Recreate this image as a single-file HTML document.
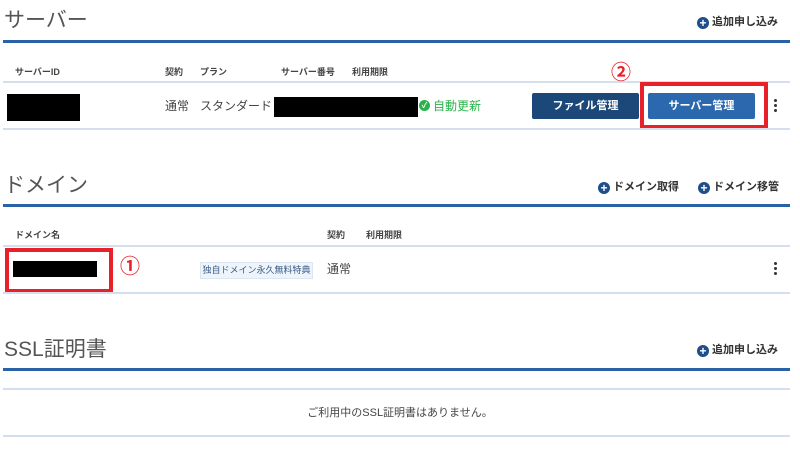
<!DOCTYPE html>
<html><head><meta charset="utf-8"><style>
*{margin:0;padding:0;box-sizing:border-box}
body{width:800px;height:457px;background:#fff;position:relative;overflow:hidden;font-family:"Liberation Sans","Noto Sans CJK JP",sans-serif;color:#333}
.a{position:absolute;white-space:nowrap}
.t{font-size:21px;color:#555;line-height:24px}
.bl{position:absolute;left:3px;width:787px;height:3px;background:#2a62a6}
.ll{position:absolute;left:3px;width:787px;height:2px;background:#d3dfec}
.h{font-size:9px;font-weight:bold;color:#444;line-height:12px}
.c{font-size:12px;color:#444;line-height:14px}
.blk{position:absolute;background:#000}
.add{font-size:11px;font-weight:bold;color:#333;line-height:14px}
.add i{display:inline-block;width:12px;height:12px;border-radius:50%;background:#1e4f8a;color:#fff;font-style:normal;font-size:12px;line-height:12px;text-align:center;vertical-align:-2px;margin-right:3px}
.btn{position:absolute;height:26px;border-radius:2px;color:#fff;font-size:11px;font-weight:bold;text-align:center;line-height:26px}
.red{position:absolute;border:4px solid #e8202a}
.dots{position:absolute;width:3px}
.dots b{display:block;width:3px;height:3px;border-radius:50%;background:#333;margin-bottom:2px}
.n{font-size:20px;color:#e8202a;font-weight:bold;line-height:20px}
</style></head><body>
<div class="a t" style="left:4px;top:9px">サーバー</div>
<div class="a add" style="left:697px;top:15px"><i>+</i>追加申し込み</div>
<div class="bl" style="top:40px"></div>
<div class="a h" style="left:15px;top:66px">サーバーID</div>
<div class="a h" style="left:165px;top:66px">契約</div>
<div class="a h" style="left:200px;top:66px">プラン</div>
<div class="a h" style="left:281px;top:66px">サーバー番号</div>
<div class="a h" style="left:352px;top:66px">利用期限</div>
<div class="ll" style="top:81px"></div>
<div class="blk" style="left:7px;top:94px;width:73px;height:27px"></div>
<div class="a c" style="left:165px;top:99px">通常</div>
<div class="a c" style="left:200px;top:99px">スタンダード</div>
<div class="blk" style="left:274px;top:97px;width:144px;height:20px"></div>
<div class="a" style="left:419px;top:100px;width:11px;height:11px;border-radius:50%;background:#2bb24c;color:#fff;font-size:8px;line-height:11px;text-align:center;font-weight:bold">✓</div>
<div class="a c" style="left:433px;top:99px;color:#2bb24c">自動更新</div>
<div class="a n" style="left:611px;top:63px">②</div>
<div class="btn" style="left:532px;top:93px;width:107px;background:#1b4879">ファイル管理</div>
<div class="red" style="left:640px;top:82px;width:128px;height:47px"></div>
<div class="btn" style="left:648px;top:93px;width:107px;background:#2c68ae">サーバー管理</div>
<div class="dots" style="left:774px;top:99px"><b></b><b></b><b></b></div>
<div class="ll" style="top:128px"></div>

<div class="a t" style="left:4px;top:174px">ドメイン</div>
<div class="a add" style="left:598px;top:180px"><i>+</i>ドメイン取得</div>
<div class="a add" style="left:698px;top:180px"><i>+</i>ドメイン移管</div>
<div class="bl" style="top:204px"></div>
<div class="a h" style="left:15px;top:229px">ドメイン名</div>
<div class="a h" style="left:327px;top:229px">契約</div>
<div class="a h" style="left:366px;top:229px">利用期限</div>
<div class="ll" style="top:245px"></div>
<div class="red" style="left:5px;top:248px;width:108px;height:45px"></div>
<div class="blk" style="left:13px;top:261px;width:84px;height:16px"></div>
<div class="a n" style="left:120px;top:257px">①</div>
<div class="a" style="left:200px;top:262px;width:113px;height:17px;background:#eef4fb;border:1px solid #dbe6f2;font-size:9px;color:#3a5c86;line-height:15px;text-align:center">独自ドメイン永久無料特典</div>
<div class="a c" style="left:327px;top:262px">通常</div>
<div class="dots" style="left:774px;top:262px"><b></b><b></b><b></b></div>
<div class="ll" style="top:292px"></div>

<div class="a t" style="left:4px;top:338px">SSL証明書</div>
<div class="a add" style="left:697px;top:343px"><i>+</i>追加申し込み</div>
<div class="bl" style="top:368px"></div>
<div class="ll" style="top:388px"></div>
<div class="a" style="left:0;width:800px;top:404px;text-align:center;font-size:11px;color:#444">ご利用中のSSL証明書はありません。</div>
<div class="ll" style="top:435px"></div>
</body></html>
